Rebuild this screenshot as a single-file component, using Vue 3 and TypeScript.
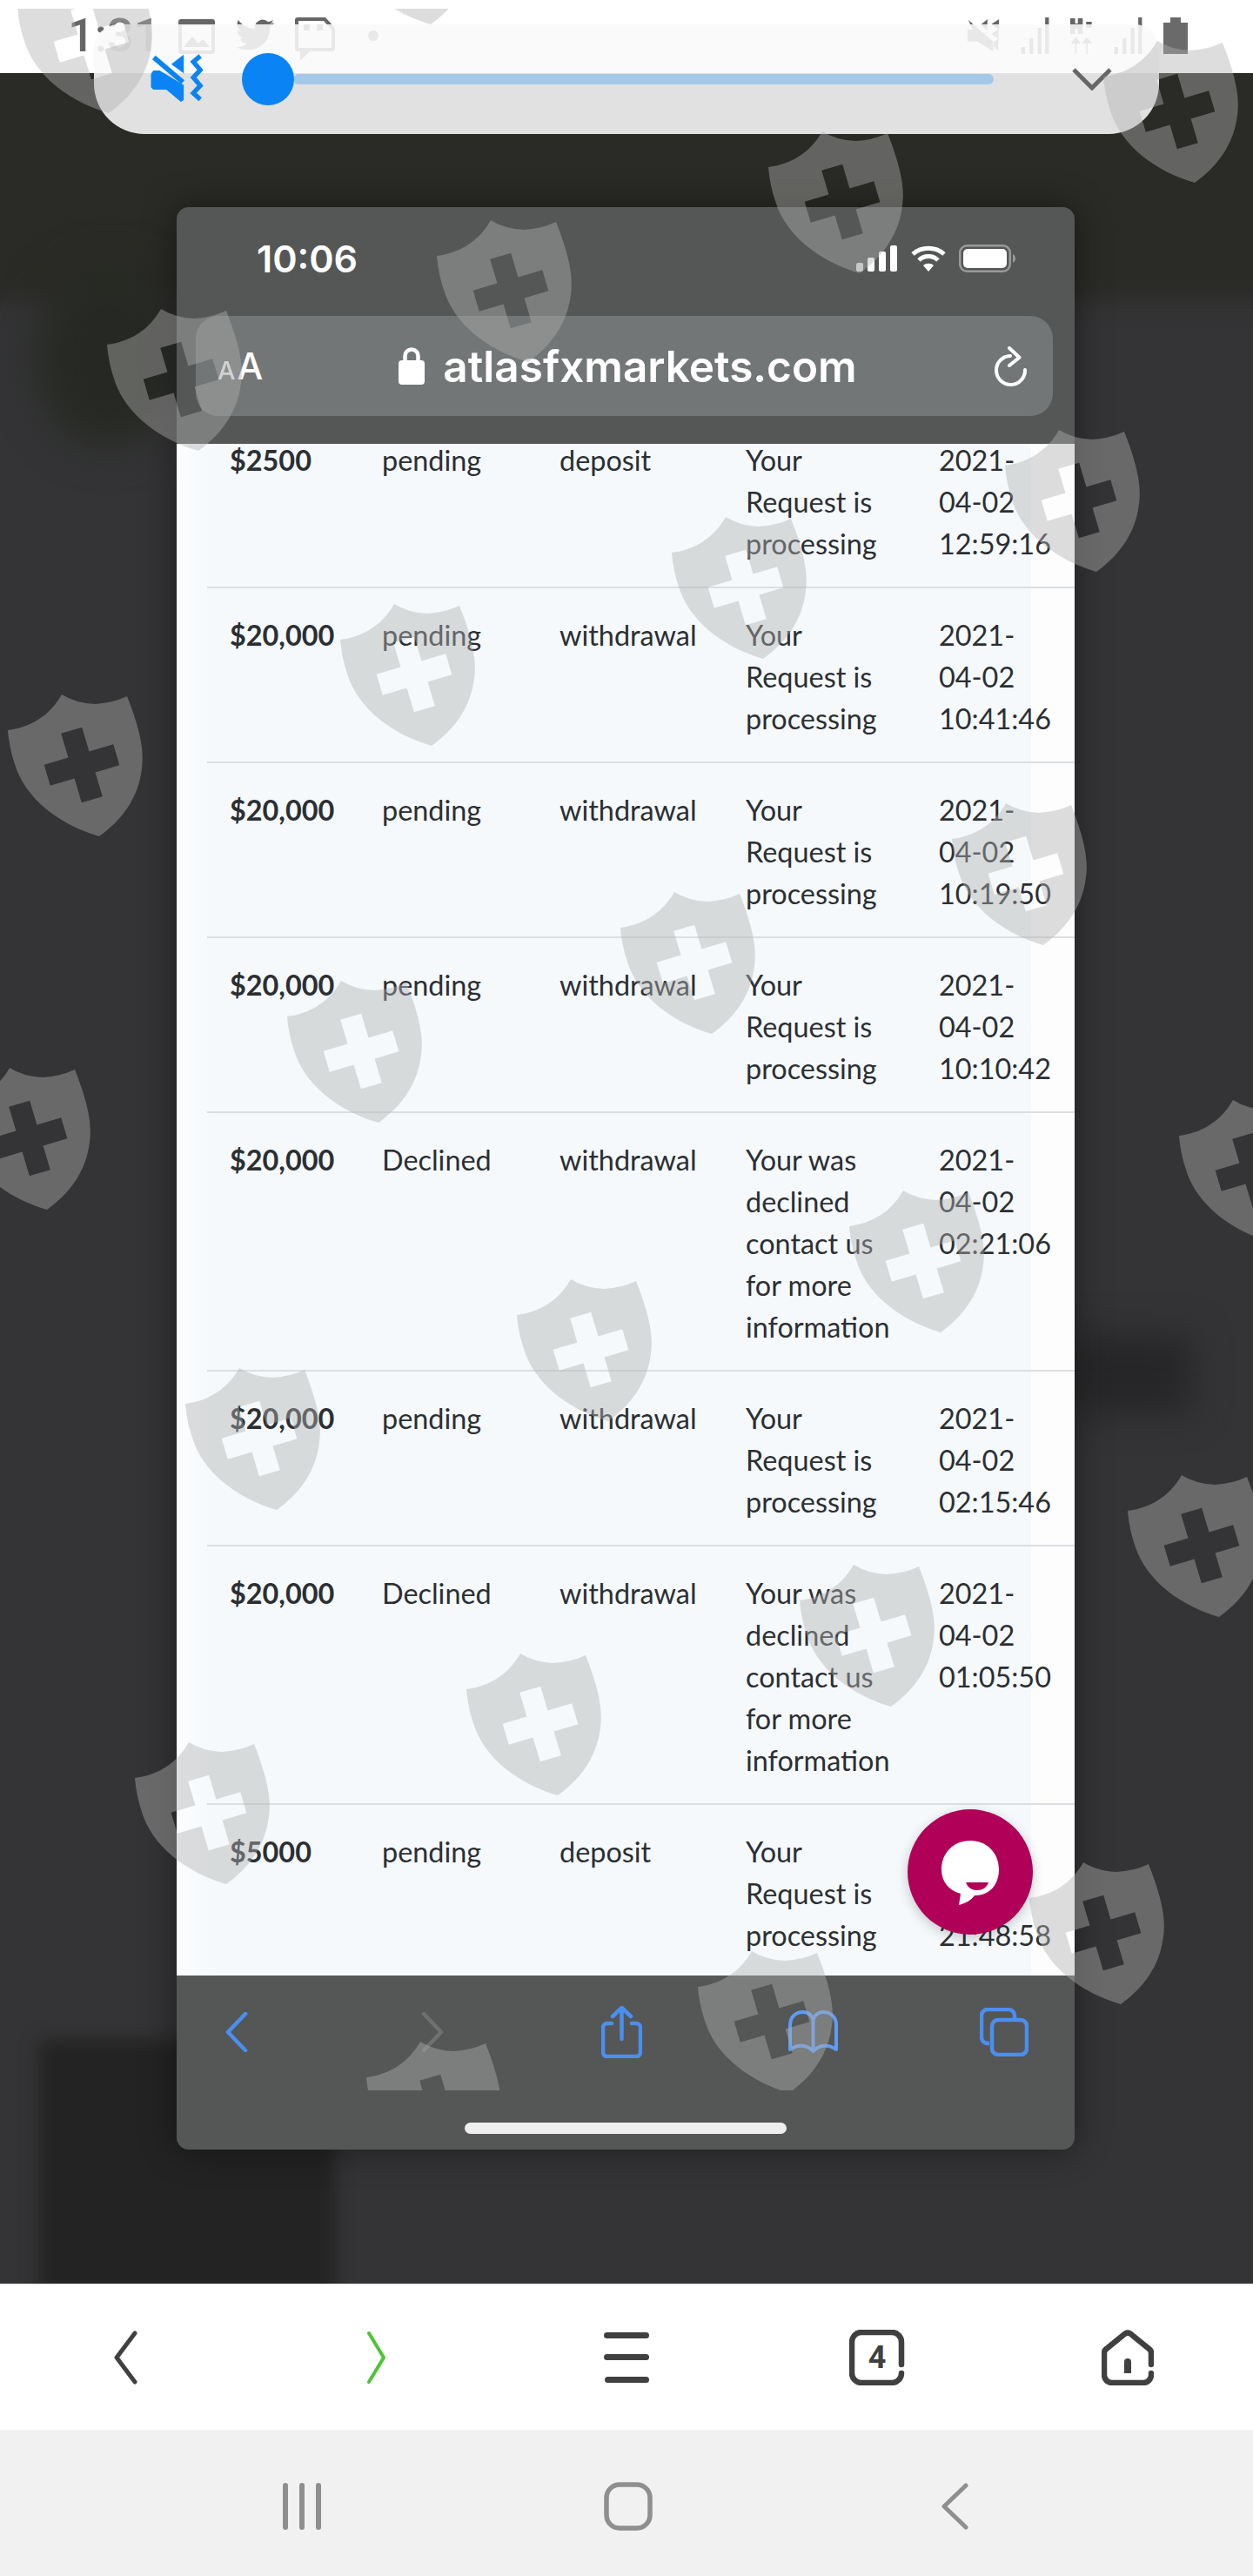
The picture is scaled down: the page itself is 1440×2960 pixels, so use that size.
<template>
  <div class="screen">
    <div class="status">
      <span class="clock">1:31</span>
      <svg class="st-ico" width="42" height="42" viewBox="0 0 42 42"><path d="M3 2h36a3 3 0 0 1 3 3v34a3 3 0 0 1-3 3H3a3 3 0 0 1-3-3V5a3 3 0 0 1 3-3zm1 7v29h34V9zM6 34l10-12 7 8 5-5 8 9z" fill="#666" fill-rule="evenodd"/></svg>
      <svg class="st-ico" width="44" height="42" viewBox="0 0 44 42"><path d="M44 6c-2 1-3 1-5 2 2-1 3-3 4-5-2 1-4 2-6 2a9 9 0 0 0-15 8C14 13 7 9 3 3c-3 5-1 10 3 13-2 0-3-1-4-1 0 5 3 8 7 9H5c1 3 4 6 8 6-4 3-8 4-13 4 18 9 40-1 39-23 2-1 4-3 5-5z" fill="#666"/></svg>
      <svg class="st-ico" width="46" height="50" viewBox="0 0 46 50"><path d="M3 0h32l11 12v24a3 3 0 0 1-3 3H17L6 50V39H3a3 3 0 0 1-3-3V3a3 3 0 0 1 3-3zm1 4v31h38V14L33 4z" fill="#666" fill-rule="evenodd"/><rect x="10" y="8" width="7" height="7" fill="#666"/><rect x="25" y="8" width="7" height="7" fill="#666"/></svg>
      <span class="st-dot"></span>
      <div class="st-right">
        <svg width="40" height="42" viewBox="0 0 42 42"><path d="M3 2l30 26v12L14 28H2V14h6zM26 1l-8 7 8 7zM40 1l-9 6 8 6-8 6 8 6-8 6 8 8" fill="#666"/></svg>
        <svg width="36" height="42" viewBox="0 0 42 42" preserveAspectRatio="none"><path d="M2 34h5v8H2zM13 24h5v18h-5zM24 12h5v30h-5zM34 0h5v42h-5z" fill="#666"/></svg>
        <svg width="27" height="42" viewBox="0 0 34 42" preserveAspectRatio="none"><path d="M1 2h5v16H1zM12 2h5v16h-5zM1 8h16v4H1zM24 6h6v5h-6zM8 42V24M2 30l6-6 6 6M24 42V24M18 30l6-6 6 6" fill="#666" stroke="#666" stroke-width="2"/></svg>
        <svg width="36" height="42" viewBox="0 0 42 42" preserveAspectRatio="none"><path d="M2 34h5v8H2zM13 24h5v18h-5zM24 12h5v30h-5zM34 0h5v42h-5z" fill="#666"/></svg>
        <svg width="28" height="42" viewBox="0 0 28 42"><path d="M8 0h12v6h8v36H0V6h8z" fill="#6a6a6a"/></svg>
      </div>
    </div>

    <div class="stage">
      <div class="blob blob-band"></div>
      <div class="blob blob-green"></div>
      <div class="blob blob-foot"></div>
      <div class="blob blob-side"></div>

      <div class="phone">
        <div class="phone-head">
          <div class="ios-status">
            <span class="ios-time">10:06</span>
            <div class="ios-icons">
              <svg width="48" height="30" viewBox="0 0 48 30"><rect x="0" y="20" width="8" height="10" rx="2" fill="#d8d8d8"/><rect x="13" y="14" width="8" height="16" rx="2" fill="#fff"/><rect x="26" y="7" width="8" height="23" rx="2" fill="#fff"/><rect x="39" y="0" width="8" height="30" rx="2" fill="#fff"/></svg>
              <svg width="42" height="30" viewBox="0 0 42 30" fill="none" stroke="#fff" stroke-width="5"><path d="M3 10c10-9 26-9 36 0"/><path d="M10 17c6-6 16-6 22 0"/><path d="M21 30l-6-7c3-3 9-3 12 0z" fill="#fff" stroke="none"/></svg>
              <svg width="66" height="32" viewBox="0 0 66 32"><rect x="1.250" y="1.250" width="57.500" height="29.500" rx="8" fill="none" stroke="#999" stroke-width="2.500"/><rect x="5" y="5" width="50" height="22" rx="5" fill="#fff"/><path d="M62 11c2 1 3 3 3 5s-1 4-3 5z" fill="#999"/></svg>
            </div>
          </div>
          <div class="url-bar">
            <span class="aa"><small>A</small>A</span>
            <div class="url-mid">
              <svg width="30" height="43" viewBox="0 0 30 43"><path d="M7.500 17v-7a7.500 7.500 0 0 1 15 0v7" fill="none" stroke="#fff" stroke-width="4.500"/><rect x="0" y="15" width="30" height="28" rx="4" fill="#fff"/></svg>
              <span class="domain">atlasfxmarkets.com</span>
            </div>
            <svg width="37" height="46" viewBox="0 0 37 46" fill="none" stroke="#fff" stroke-width="4" stroke-linecap="round" stroke-linejoin="round"><path d="M18 11A16.500 16.500 0 1 0 35 27"/><path d="M17 2l11.500 10.700L17 22"/></svg>
          </div>
        </div>

        <div class="table-clip">
          <div class="rows">
            <div v-for="row in rows" :key="row.date" class="row">
              <div class="amount">{{ row.amount }}</div>
              <div>{{ row.status }}</div>
              <div>{{ row.type }}</div>
              <div class="msg">{{ row.message }}</div>
              <div class="date">{{ row.date }}</div>
            </div>
          </div>
          <div class="chat">
            <svg width="78" height="76" viewBox="0 0 78 76"><path d="M39 0c19 0 33 14 33 33 0 17-10 30-28 30-4 6-11 9-18 11l2-13C14 57 6 47 6 33 6 14 20 0 39 0z" fill="#fff"/><path d="M34 48h26c-2 6-7 9-13 9s-11-3-13-9z" fill="#b00058"/></svg>
          </div>
        </div>

        <div class="toolbar">
          <div class="tool-row">
            <svg class="t-back" width="26" height="46" viewBox="0 0 26 46" fill="none" stroke="#4a8ff0" stroke-width="4.500" stroke-linecap="round" stroke-linejoin="round"><path d="M23 2L3 23l20 21"/></svg>
            <svg class="t-fwd" width="26" height="46" viewBox="0 0 26 46" fill="none" stroke="#707070" stroke-width="4.500" stroke-linecap="round" stroke-linejoin="round"><path d="M3 2l20 21L3 44"/></svg>
            <svg class="t-share" width="47" height="60" viewBox="0 0 47 60" fill="none" stroke="#4a8ff0" stroke-width="4.500" stroke-linecap="round" stroke-linejoin="round"><path d="M12 20H7a5 5 0 0 0-5 5v28a5 5 0 0 0 5 5h33a5 5 0 0 0 5-5V25a5 5 0 0 0-5-5h-5"/><path d="M23.500 38V3M13 12L23.500 2 34 12"/></svg>
            <svg class="t-book" width="59" height="52" viewBox="0 0 59 52" fill="none" stroke="#5e9cf2" stroke-width="4" stroke-linejoin="round"><path d="M3 46V18C3 8 10 3 18 3c6 0 10 4 11.500 9C31 7 35 3 41 3c8 0 15 5 15 15v28c-8-6-19-6-26.500 2C22 40 11 40 3 46zM29.500 12v36"/></svg>
            <svg class="t-tabs" width="56" height="56" viewBox="0 0 56 56" fill="none" stroke="#4a8ff0" stroke-width="4.500"><path d="M11 41H9a7 7 0 0 1-7-7V9a7 7 0 0 1 7-7h24a7 7 0 0 1 7 7v3"/><rect x="14" y="14" width="40" height="40" rx="7"/></svg>
          </div>
          <div class="home-bar"></div>
        </div>
      </div>
    </div>

    <div class="browser-nav">
      <svg width="28" height="62" viewBox="0 0 28 62" fill="none" stroke="#404040" stroke-width="5" stroke-linecap="round" stroke-linejoin="round"><path d="M25 3L4 31l21 28"/></svg>
      <svg width="22" height="62" viewBox="0 0 22 62" fill="none" stroke="#4ec437" stroke-width="4" stroke-linecap="round" stroke-linejoin="round"><path d="M3 3l17 28L3 59"/></svg>
      <svg width="52" height="58" viewBox="0 0 52 58" fill="#404040"><rect x="0" y="0" width="52" height="7" rx="3.500"/><rect x="0" y="25" width="52" height="7" rx="3.500"/><rect x="1" y="51" width="51" height="7" rx="3.500"/></svg>
      <div class="tab-count">
        <svg width="64" height="64" viewBox="0 0 64 64" fill="none" stroke="#404040" stroke-width="6.500" stroke-linecap="round"><path d="M60 40V14A11 11 0 0 0 49 3H14A11 11 0 0 0 3 14v36a11 11 0 0 0 11 11h35a11 11 0 0 0 11-11"/></svg>
        <span>4</span>
      </div>
      <svg width="60" height="64" viewBox="0 0 60 64"><path d="M57 40V27a6 6 0 0 0-2.500-5L33 4.500a6 6 0 0 0-6 0L5.500 22A6 6 0 0 0 3 27v25a9 9 0 0 0 9 9h36a9 9 0 0 0 9-9v-2" fill="none" stroke="#404040" stroke-width="6.500" stroke-linecap="round" stroke-linejoin="round"/><path d="M26 50V37a4 4 0 0 1 8 0v13z" fill="#404040"/></svg>
    </div>

    <div class="system-nav">
      <svg width="48" height="54" viewBox="0 0 48 54" fill="#8f8f8f"><rect x="2" y="0" width="6" height="54" rx="3"/><rect x="21" y="0" width="6" height="54" rx="3"/><rect x="40" y="0" width="6" height="54" rx="3"/></svg>
      <svg width="56" height="56" viewBox="0 0 56 56"><rect x="3" y="3" width="50" height="50" rx="15" fill="none" stroke="#8f8f8f" stroke-width="5.500"/></svg>
      <svg width="32" height="54" viewBox="0 0 32 54" fill="none" stroke="#8f8f8f" stroke-width="5" stroke-linecap="round" stroke-linejoin="round"><path d="M29 3L4 27l25 24"/></svg>
    </div>

    <div class="volume">
      <svg class="mute" width="67" height="60" viewBox="510 190 200 180"><path d="M590 228l43-33v65zM520 262l8-12h22l83 50v52l-10 6-50-42h-45l-8-8z" fill="#0a84f4"/><path d="M530 205l100 85" stroke="#0a84f4" stroke-width="17"/><path d="M690 200l-24 20 24 28-24 26 24 28-24 26 24 22" fill="none" stroke="#0a84f4" stroke-width="16"/></svg>
      <div class="track">
        <span class="knob"></span>
      </div>
      <svg class="chev" width="46" height="26" viewBox="0 0 46 26" fill="none" stroke="#666" stroke-width="5"><path d="M2 2l21 21L44 2"/></svg>
    </div>

    <div class="watermarks">
      <svg
        v-for="(s, i) in shields"
        :key="i"
        class="shield"
        width="158"
        height="166"
        viewBox="0 0 158 166"
        :style="{ left: s[0] + 'px', top: s[1] - 10 + 'px' }"
      >
        <path :d="shieldPath" fill="#b1b1b1" fill-opacity="0.43" fill-rule="evenodd" />
      </svg>
    </div>
  </div>
</template>

<script setup lang="ts">
interface TxRow {
  amount: string
  status: string
  type: string
  message: string
  date: string
}

const processing = 'Your Request is processing'
const declined = 'Your was declined contact us for more information'

const rows: TxRow[] = [
  { amount: '$2500', status: 'pending', type: 'deposit', message: processing, date: '2021-04-02 12:59:16' },
  { amount: '$20,000', status: 'pending', type: 'withdrawal', message: processing, date: '2021-04-02 10:41:46' },
  { amount: '$20,000', status: 'pending', type: 'withdrawal', message: processing, date: '2021-04-02 10:19:50' },
  { amount: '$20,000', status: 'pending', type: 'withdrawal', message: processing, date: '2021-04-02 10:10:42' },
  { amount: '$20,000', status: 'Declined', type: 'withdrawal', message: declined, date: '2021-04-02 02:21:06' },
  { amount: '$20,000', status: 'pending', type: 'withdrawal', message: processing, date: '2021-04-02 02:15:46' },
  { amount: '$20,000', status: 'Declined', type: 'withdrawal', message: declined, date: '2021-04-02 01:05:50' },
  { amount: '$5000', status: 'pending', type: 'deposit', message: processing, date: '2021-04-01 21:48:58' }
]

// shield outline plus the cut-out cross
const shieldPath =
  'M62 0Q78 10 100 11Q120 10 137 2C152 40 157 65 154 85C150 120 130 145 105 163C60 150 20 120 8 80C3 65 1 52 0 41C25 38 48 25 62 0Z' +
  'M61.200 44.750L85.200 37.650L93.450 65.450L121.250 57.200L128.350 81.200L100.550 89.450L108.800 117.250L84.800 124.350L76.550 96.550L48.750 104.800L41.650 80.800L69.450 72.550Z'

// watermark tiles, page coordinates
const shields: [number, number][] = [
  [390, -135], [20, -33],
  [1268, 47], [883, 151], [502, 253], [123, 355],
  [1155, 494], [772, 594], [391, 694], [9, 798],
  [1094, 923], [713, 1025], [330, 1127], [-51, 1227],
  [1355, 1264], [976, 1368], [594, 1470], [213, 1572],
  [1296, 1695], [919, 1798], [536, 1900], [155, 2002],
  [1183, 2140], [802, 2242], [421, 2346]
]
</script>

<style scoped>
.screen {
  position: relative;
  width: 1440px;
  height: 2960px;
  overflow: hidden;
  display: flex;
  flex-direction: column;
  background: #fff;
  font-family: Lato, "Liberation Sans", sans-serif;
}

.status {
  height: 84px;
  flex: none;
  box-sizing: border-box;
  background: #fff;
  display: flex;
  align-items: flex-start;
  padding: 20px 75px 0 78px;
}

.clock {
  font-family: Roboto, sans-serif;
  font-size: 54px;
  line-height: 42px;
  font-weight: 500;
  color: #666;
  width: 127px;
}

.st-ico {
  margin-right: 24px;
}

.st-dot {
  width: 12px;
  height: 12px;
  margin: 15px 0 0 14px;
  border-radius: 50%;
  background: #666;
}

.st-right {
  margin-left: auto;
  display: flex;
  gap: 22px;
}

.stage {
  position: relative;
  flex: 1;
  background: #343436;
  padding: 154px 0 0 203px;
  overflow: hidden;
}

.blob {
  position: absolute;
}

.blob-band {
  left: -60px;
  right: -60px;
  top: -40px;
  height: 300px;
  background: #2a2a26;
  filter: blur(14px);
}

.blob-green {
  left: 40px;
  top: 220px;
  width: 170px;
  height: 210px;
  border-radius: 50%;
  background: #262923;
  filter: blur(24px);
}

.blob-foot {
  left: 45px;
  top: 2260px;
  width: 340px;
  height: 320px;
  background: #232323;
  filter: blur(10px);
}

.blob-side {
  left: 1230px;
  top: 1450px;
  width: 140px;
  height: 90px;
  background: #262628;
  filter: blur(20px);
}

.phone {
  position: relative;
  width: 1032px;
  height: 2232px;
  border-radius: 14px;
  overflow: hidden;
  display: flex;
  flex-direction: column;
  box-shadow: 0 0 40px rgba(0, 0, 0, 0.45);
}

.phone-head {
  height: 272px;
  flex: none;
  background: #555757;
  box-sizing: border-box;
}

.ios-status {
  height: 125px;
  box-sizing: border-box;
  padding: 0 67px 7px 92px;
  display: flex;
  align-items: center;
  justify-content: space-between;
}

.ios-time {
  font-family: Inter, sans-serif;
  font-size: 43px;
  font-weight: 600;
  color: #fff;
}

.ios-icons {
  display: flex;
  align-items: center;
  gap: 14px;
}

.url-bar {
  height: 115px;
  margin: 0 25px 0 22px;
  padding: 0 30px 0 25px;
  box-sizing: border-box;
  background: #737677;
  border-radius: 26px;
  display: flex;
  align-items: center;
  justify-content: space-between;
  color: #fff;
}

.aa {
  font-family: Inter, sans-serif;
  font-size: 42px;
  font-weight: 500;
  width: 50px;
  line-height: 1;
  white-space: nowrap;
}

.aa small {
  font-size: 29px;
  opacity: 0.85;
  margin-right: 2px;
}

.url-mid {
  display: flex;
  align-items: center;
  gap: 21px;
}

.domain {
  font-family: Inter, sans-serif;
  font-size: 49.500px;
  font-weight: 600;
}

.table-clip {
  position: relative;
  flex: 1;
  overflow: hidden;
  background: linear-gradient(90deg, #fcfdfe 0, #f5f9fc 40px, #f5f9fc 982px, #fdfdfe 982px);
}

.rows {
  margin: -35px 0 0 35px;
}

.row {
  display: grid;
  grid-template-columns: 175px 204px 214px 222px 1fr;
  padding: 30px 0 25px 26px;
  border-bottom: 2px solid #dcdfe2;
  font-size: 32.400px;
  line-height: 48px;
  color: #2b2f33;
}

.amount {
  font-weight: 700;
}

.msg {
  width: 176px;
}

.date {
  width: 130px;
}

.chat {
  position: absolute;
  left: 840px;
  top: 1569px;
  width: 144px;
  height: 144px;
  border-radius: 50%;
  background: #b00058;
  box-shadow: 0 4px 14px rgba(0, 0, 0, 0.2);
  display: flex;
  align-items: center;
  justify-content: center;
  box-sizing: border-box;
  padding-top: 4px;
}

.toolbar {
  height: 200px;
  flex: none;
  background: #555656;
}

.tool-row {
  height: 130px;
  padding-left: 56px;
  display: flex;
  align-items: center;
}

.t-fwd {
  margin-left: 199px;
}

.t-share {
  margin-left: 181px;
}

.t-book {
  margin-left: 167px;
}

.t-tabs {
  margin-left: 162px;
}

.home-bar {
  width: 370px;
  height: 13px;
  margin: 39px 0 0 331px;
  border-radius: 7px;
  background: #eee;
}

.browser-nav {
  height: 168px;
  flex: none;
  box-sizing: border-box;
  background: #fff;
  border-top: 1px solid #ddd;
  display: grid;
  grid-template-columns: repeat(5, 288px);
  align-items: center;
  justify-items: center;
}

.tab-count {
  position: relative;
  width: 64px;
  height: 64px;
}

.tab-count svg {
  display: block;
}

.tab-count span {
  position: absolute;
  inset: 0;
  display: flex;
  align-items: center;
  justify-content: center;
  font-family: Roboto, sans-serif;
  font-size: 36px;
  font-weight: 700;
  color: #404040;
}

.system-nav {
  height: 168px;
  flex: none;
  box-sizing: border-box;
  background: #f1f1f1;
  padding: 8px 0 0 4px;
  display: grid;
  grid-template-columns: repeat(3, 375px);
  justify-content: center;
  align-items: center;
  justify-items: center;
}

.volume {
  position: absolute;
  left: 108px;
  top: 28px;
  width: 1224px;
  height: 126px;
  box-sizing: border-box;
  padding: 0 54px 0 62px;
  background: rgba(249, 249, 249, 0.887);
  border-radius: 28px 28px 58px 58px;
  display: flex;
  align-items: center;
}

.mute {
  flex: none;
}

.track {
  position: relative;
  width: 807px;
  height: 12px;
  margin-left: 100px;
  border-radius: 6px;
  background: #a4c8ea;
}

.knob {
  position: absolute;
  left: -59px;
  top: -24px;
  width: 60px;
  height: 60px;
  border-radius: 50%;
  background: #0a84f4;
}

.chev {
  margin-left: 90px;
}

.watermarks {
  position: absolute;
  left: 0;
  top: 10px;
  width: 1440px;
  height: 2392px;
  overflow: hidden;
  pointer-events: none;
}

.shield {
  position: absolute;
}
</style>
